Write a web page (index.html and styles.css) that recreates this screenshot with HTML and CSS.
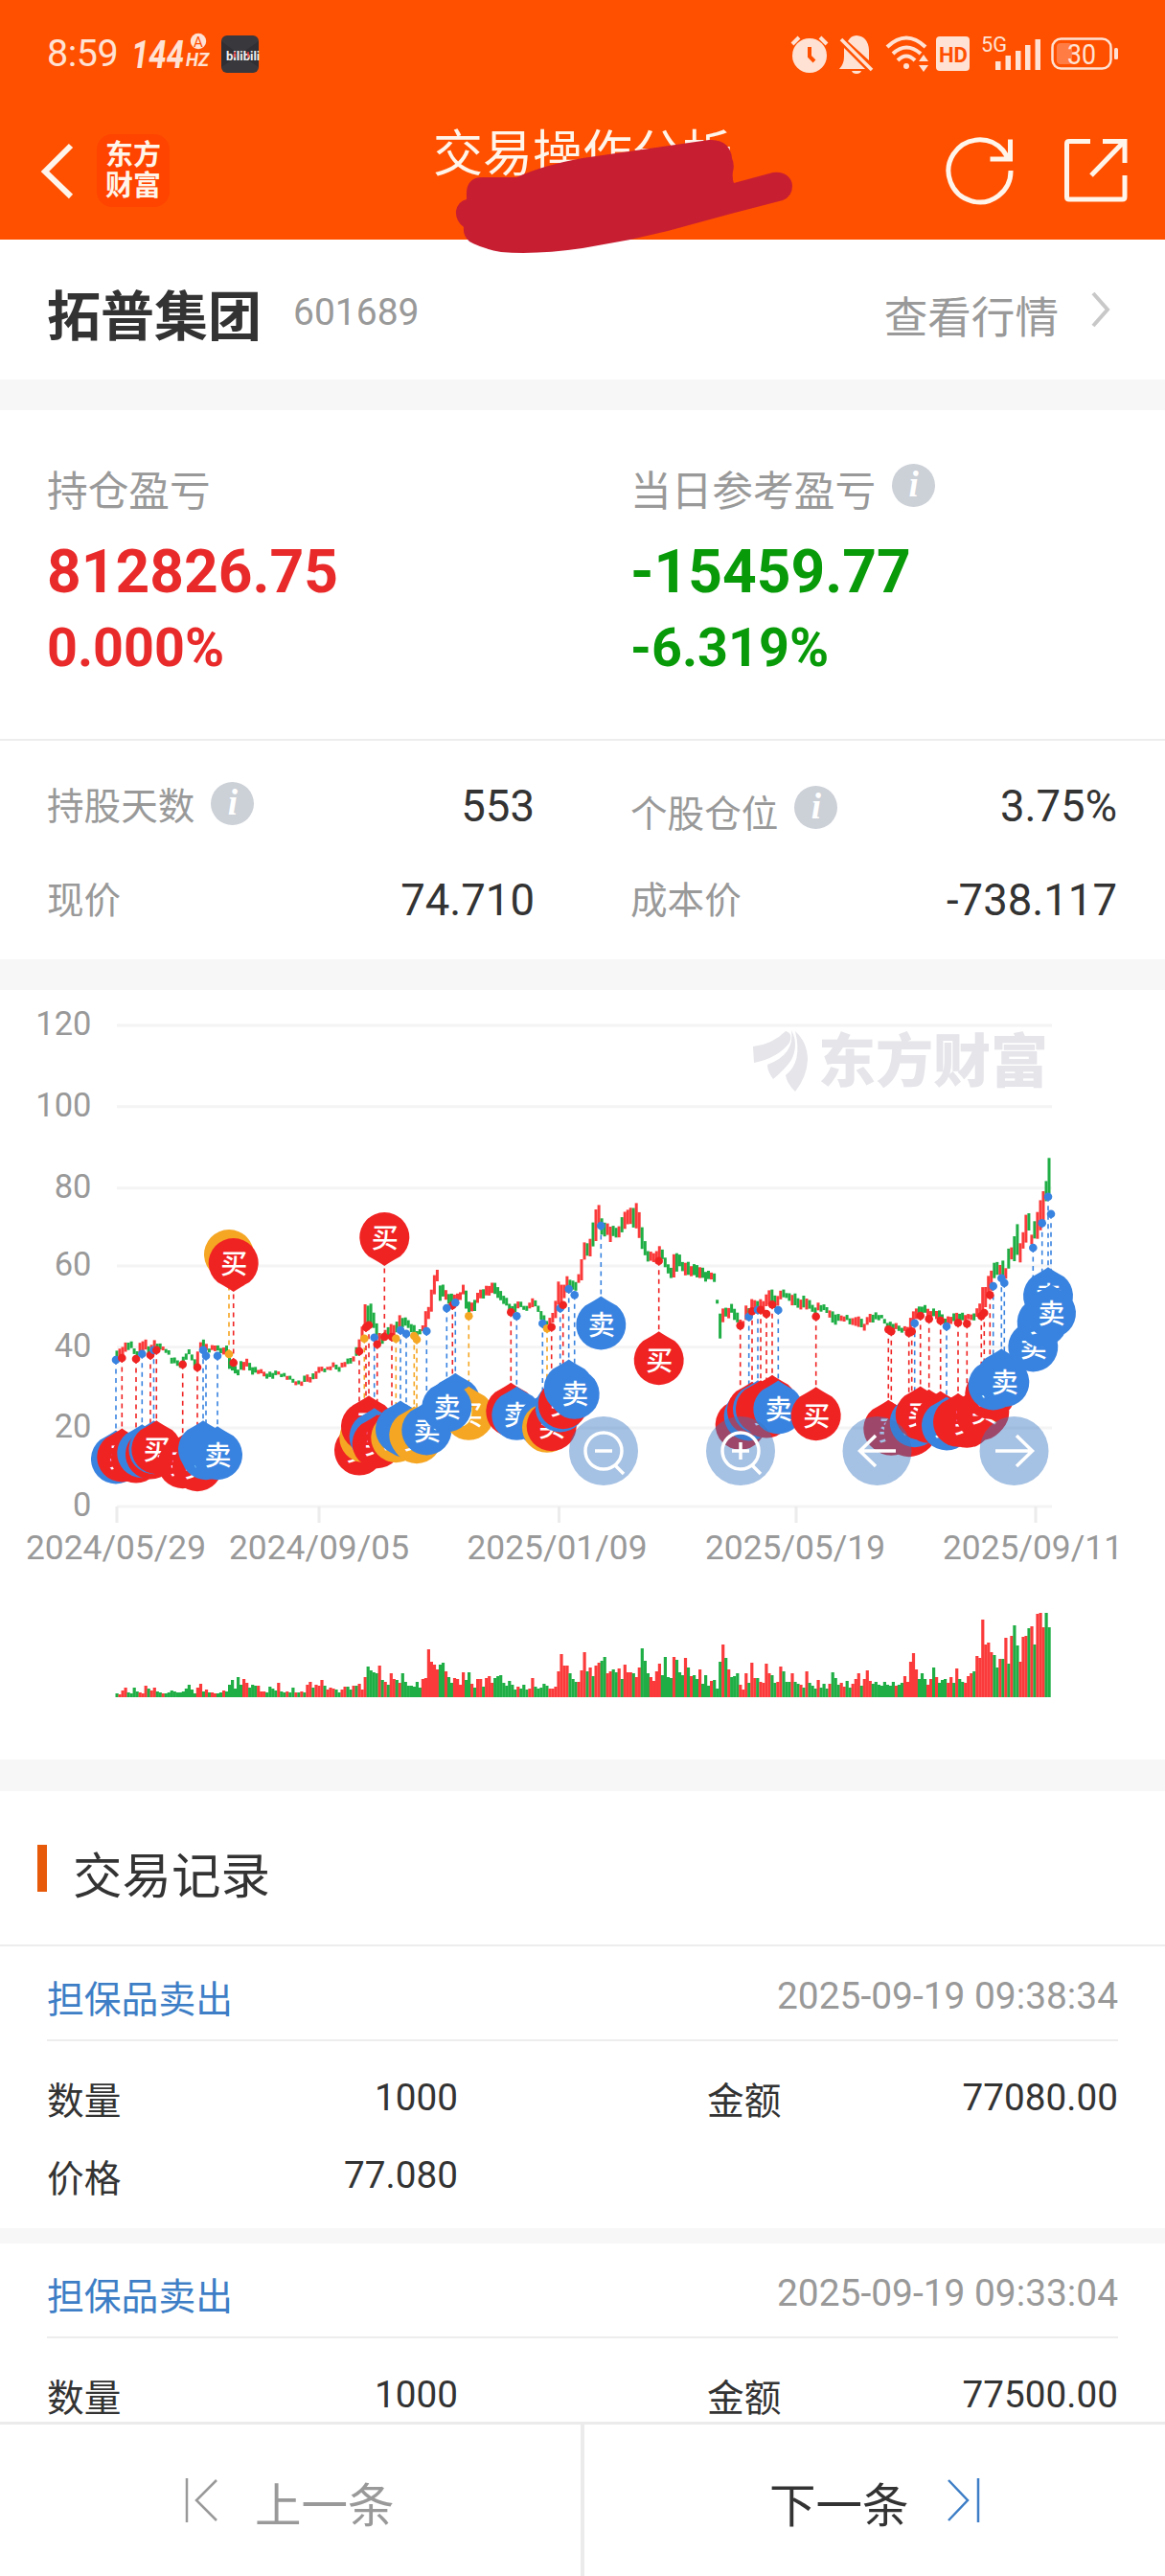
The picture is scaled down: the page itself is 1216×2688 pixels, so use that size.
FILE: index.html
```html
<!DOCTYPE html>
<html lang="zh-CN">
<head>
    <meta charset="UTF-8">
    <meta name="viewport" content="width=device-width, initial-scale=1.0">
    <title>交易操作分析</title>
    <link rel="stylesheet" href="styles.css">
</head>
<body>
    <header class="header">
        <!-- 状态栏 -->
        <div class="status-bar">
            <span class="time">8:59</span>
            <svg class="hz" width="60" height="44" viewBox="0 0 60 44">
                <text x="0" y="38" font-size="40" font-weight="700" font-style="italic" textLength="55" lengthAdjust="spacingAndGlyphs">144</text>
            </svg>
            <svg class="hz-unit" width="28" height="44" viewBox="0 0 28 44">
                <circle cx="14" cy="10" r="8.2"/>
                <text x="9" y="15.5" font-size="15" class="on-light">A</text>
                <text x="1" y="36" font-size="20" font-weight="700" font-style="italic" textLength="24" lengthAdjust="spacingAndGlyphs">HZ</text>
            </svg>
            <svg class="app-badge" width="39" height="39" viewBox="0 0 39 39">
                <rect width="39" height="39" rx="6" fill="#38383d"/>
                <path d="M0 6L19 20L39 6V33L19 20L0 33z" fill="#2f2f34"/>
                <text x="5" y="26" font-size="13" font-weight="700" fill="#eee">bilibili</text>
                <path d="M14 17V23M28 17V23" stroke="#e33" stroke-width="1.5"/>
            </svg>
            <div class="status-icons">
                <svg width="40" height="40" viewBox="0 0 40 40">
                    <circle cx="20" cy="21" r="18"/>
                    <path d="M2 9L9 2M38 9L31 2" class="light-line" stroke-width="4"/>
                    <path d="M20 12V22L25 27" class="dark-line" stroke-width="4"/>
                </svg>
                <svg class="bell" width="36" height="40" viewBox="0 0 36 40">
                    <path d="M9 6Q12 0 18 0Q30 1 31 15V26zM5 13L27 35H0Q5 30 5 22z"/>
                    <path d="M13 37H23Q22 40 18 40Q14 40 13 37z"/>
                    <path d="M2 4L34 36" class="light-line" stroke-width="3.5"/>
                </svg>
                <svg class="wifi" width="46" height="38" viewBox="0 0 46 38">
                    <path d="M2 12Q22 -7 42 12M8 19Q22 6 37 19M13 26Q22 17 31 26" class="light-line" stroke-width="4"/>
                    <circle cx="22" cy="32" r="3"/>
                    <path d="M40 20L45 27H35zM40 38L45 31H35z"/>
                </svg>
                <svg class="hd" width="35" height="36" viewBox="0 0 35 36">
                    <rect width="35" height="36" rx="4"/>
                    <text x="3" y="26.5" font-size="22" font-weight="700" class="on-light" textLength="30" lengthAdjust="spacingAndGlyphs">HD</text>
                </svg>
                <svg class="signal" width="64" height="38" viewBox="0 0 64 38">
                    <text x="0" y="17" font-size="22" textLength="27" lengthAdjust="spacingAndGlyphs">5G</text>
                    <rect x="15" y="27" width="5.5" height="9"/>
                    <rect x="25.5" y="21" width="5.5" height="15"/>
                    <rect x="36" y="16" width="5.5" height="20"/>
                    <rect x="46" y="10" width="5.5" height="26"/>
                    <rect x="56.5" y="4" width="5.5" height="32"/>
                </svg>
                <svg class="battery" width="72" height="34" viewBox="0 0 72 34">
                    <rect x="1.5" y="1.5" width="61" height="31" rx="9" class="light-line" stroke-width="2.5"/>
                    <rect x="6" y="6" width="16" height="22" rx="4" fill="#ff7d45"/>
                    <text x="17" y="27.5" font-size="29" textLength="30" lengthAdjust="spacingAndGlyphs">30</text>
                    <rect x="66" y="11" width="4" height="12" rx="1.5"/>
                </svg>
            </div>
        </div>
        <!-- 导航栏 -->
        <nav class="nav-bar">
            <svg class="back" width="36" height="60" viewBox="0 0 36 60">
                <path d="M33 4L6 31L33 57" fill="none" stroke="#fff5ea" stroke-width="6"/>
            </svg>
            <div class="logo"><span>东方</span><span>财富</span></div>
            <h1 class="nav-title">交易操作分析</h1>
            <svg class="refresh" width="70" height="70" viewBox="0 0 70 70">
                <path d="M67 35A32.5 32.5 0 1 1 59 14L65 23M66.5 2.5V23H45.5"/>
            </svg>
            <svg class="share" width="66" height="66" viewBox="0 0 66 66">
                <path d="M27 2.5H5Q2.5 2.5 2.5 5V60.5Q2.5 63 5 63H60.5Q63 63 63 60.5V38M40 2.5H63V25M61 4L28 38"/>
            </svg>
        </nav>
        <svg class="scribble" width="360" height="130" viewBox="475 140 360 130">
            <path d="M487 205C486 192 492 185 503 185L539 185C560 176 580 170 608 165L740 146C756 145 763 154 764 165Q767 172 765 179Q764 186 766 191L803 181C816 177 827 184 827 194Q827 205 817 209L763 223L697 241L658 250L608 259Q560 266 523 263Q502 259 490 252Q483 246 484 237Q475 230 476 220Q478 210 487 208z"/>
        </svg>
    </header>

    <main class="content">
        <section class="stock">
            <h2 class="stock-name">拓普集团</h2>
            <span class="stock-code">601689</span>
            <a class="quote-link">查看行情</a>
            <svg class="arrow" width="22" height="38" viewBox="0 0 22 38">
                <path d="M3 2L18 19L3 36" fill="none" stroke="#c8c8c8" stroke-width="4"/>
            </svg>
        </section>

        <section class="profit">
            <div class="profit-item up">
                <p class="label">持仓盈亏</p>
                <p class="amount">812826.75</p>
                <p class="percent">0.000%</p>
            </div>
            <div class="profit-item down">
                <p class="label">当日参考盈亏<i class="info">i</i></p>
                <p class="amount">-15459.77</p>
                <p class="percent">-6.319%</p>
            </div>
        </section>

        <section class="detail">
            <div class="cell"><span class="key">持股天数<i class="info">i</i></span><b>553</b></div>
            <div class="cell low"><span class="key">个股仓位<i class="info">i</i></span><b>3.75%</b></div>
            <div class="cell"><span class="key">现价</span><b>74.710</b></div>
            <div class="cell"><span class="key">成本价</span><b>-738.117</b></div>
        </section>

        <!-- K线图和成交量 -->
        <section class="chart">
            <svg id="chart" width="1216" height="803" viewBox="0 1033 1216 803">
                <g id="grid"></g>
                <g class="watermark">
                    <path d="M786 1092Q806 1090 820 1076Q828 1078 824 1088Q812 1104 787 1109zM826 1075Q834 1090 826 1106Q820 1115 807 1126Q801 1118 801 1111Q830 1100 826 1075zM830 1076Q843 1088 843 1106Q842 1124 830 1139Q821 1130 820 1122Q838 1108 830 1076z"/>
                    <text x="854" y="1129" font-size="60">东方财富</text>
                </g>
                <g id="volume"></g>
                <g id="candles"></g>
                <g id="leaders"></g>
                <g id="dots"></g>
                <g id="pins"></g>
                <g class="tools">
                    <circle cx="630" cy="1514" r="36"/>
                    <circle cx="773" cy="1514" r="36"/>
                    <circle cx="915.5" cy="1514" r="36"/>
                    <circle cx="1058.5" cy="1514" r="36"/>
                    <path d="M649 1514a19 19 0 1 1 -38 0a19 19 0 1 1 38 0M641 1528L651 1538M621 1514H639"/>
                    <path d="M792 1514a19 19 0 1 1 -38 0a19 19 0 1 1 38 0M784 1528L794 1538M764 1514H782M773 1505V1523"/>
                    <path d="M935 1514H897M914 1498L897.5 1514L914 1530"/>
                    <path d="M1039 1514H1077M1061 1498L1077.5 1514L1061 1530"/>
                </g>
            </svg>
        </section>

        <section class="records">
            <h2 class="records-title">交易记录</h2>
            <article class="record">
                <div class="record-head"><span class="type">担保品卖出</span><time>2025-09-19 09:38:34</time></div>
                <dl class="record-body">
                    <dt>数量</dt><dd>1000</dd>
                    <dt>金额</dt><dd>77080.00</dd>
                    <dt>价格</dt><dd>77.080</dd>
                </dl>
            </article>
            <article class="record">
                <div class="record-head"><span class="type">担保品卖出</span><time>2025-09-19 09:33:04</time></div>
                <dl class="record-body">
                    <dt>数量</dt><dd>1000</dd>
                    <dt>金额</dt><dd>77500.00</dd>
                </dl>
            </article>
        </section>
    </main>

    <footer class="pager">
        <a class="prev">
            <svg width="34" height="48" viewBox="0 0 34 48"><path d="M2 1V47M33 3L12 24L33 45"/></svg>
            <span>上一条</span>
        </a>
        <a class="next">
            <span>下一条</span>
            <svg width="36" height="48" viewBox="0 0 36 48"><path d="M2 3L22 24L2 45M33 1V47"/></svg>
        </a>
    </footer>
    <script src="chart.js"></script>
</body>
</html>
```

FILE: styles.css
```css
* {
    box-sizing: border-box;
}

body {
    display: flex;
    flex-direction: column;
    width: 1216px;
    height: 2688px;
    margin: 0;
    overflow: hidden;
    background: #f7f7f7;
    color: #333;
    font-family: Roboto, "Noto Sans CJK SC", sans-serif;
}

h1, h2, p, dl, dd {
    margin: 0;
    font-weight: 400;
}

svg {
    display: block;
    flex: none;
    overflow: visible;
}

/* 顶部 */
.header {
    position: relative;
    flex: none;
    height: 250px;
    background: #ff5000;
}

.status-bar {
    display: flex;
    align-items: flex-start;
    height: 106px;
    padding: 33px 47px 0 49px;
    color: #ffe2d3;
    fill: #ffe2d3;
}

.time {
    width: 88px;
    font-size: 39.5px;
    line-height: 46px;
    letter-spacing: -0.5px;
}

.hz-unit {
    margin-left: -4px;
}

.app-badge {
    margin: 4px 0 0 10px;
}

.on-light {
    fill: #ff5000;
}

.light-line {
    fill: none;
    stroke: #ffe2d3;
}

.dark-line {
    fill: none;
    stroke: #ff5000;
}

.status-icons {
    display: flex;
    margin: 4px 0 0 auto;
}

.bell {
    margin-left: 11px;
}

.wifi {
    margin-left: 12px;
}

.hd {
    margin: 1px 0 0 7px;
}

.signal {
    margin-left: 12px;
}

.battery {
    margin: 2px 0 0 9px;
}

.nav-bar {
    display: flex;
    align-items: center;
    height: 144px;
    padding: 0 39px 0 41px;
}

.logo {
    display: flex;
    flex-direction: column;
    justify-content: center;
    width: 76px;
    height: 76px;
    margin-left: 24px;
    border-radius: 16px;
    background: #ff4400;
    color: #fff5ea;
    font-size: 29px;
    font-weight: 700;
    line-height: 32px;
    text-align: center;
}

.nav-title {
    margin: -32px 0 0 275px;
    color: #fff5ea;
    font-size: 52px;
    line-height: 60px;
}

.refresh,
.share {
    fill: none;
    stroke: #fff5ea;
    stroke-width: 5;
}

.refresh {
    margin-left: auto;
}

.share {
    margin-left: 53px;
}

.scribble {
    position: absolute;
    left: 475px;
    top: 140px;
    z-index: 1;
    fill: #c81e32;
}

/* 页面内容 */
.content {
    flex: 1;
    min-height: 0;
    overflow: hidden;
}

.stock {
    display: flex;
    align-items: center;
    height: 146px;
    padding: 0 56px 0 49px;
    background: #fff;
}

.stock-name {
    padding-top: 16px;
    font-size: 56px;
    font-weight: 700;
    line-height: 66px;
}

.stock-code {
    margin: 5px 0 0 33px;
    color: #999;
    font-size: 39px;
}

.quote-link {
    margin: 9px 33px 0 auto;
    color: #999;
    font-size: 45.6px;
}

.profit {
    display: flex;
    height: 345px;
    margin-top: 32px;
    padding: 56px 0 0 49px;
    border-bottom: 2px solid #ededed;
    background: #fff;
}

.profit-item {
    flex: none;
    width: 609px;
}

.label {
    display: flex;
    height: 56px;
    color: #999;
    font-size: 42.7px;
    line-height: 58px;
}

.info {
    width: 45px;
    height: 45px;
    margin-left: 17px;
    border-radius: 50%;
    background: #ccd0d7;
    color: #fff;
    font: italic 700 37px/43px "Liberation Serif", serif;
    text-align: center;
}

.amount {
    margin-top: 17px;
    font-size: 62.3px;
    font-weight: 700;
    line-height: 80px;
}

.percent {
    font-size: 55.7px;
    font-weight: 700;
    line-height: 78px;
}

.up {
    color: #e92a2a;
}

.down {
    color: #089a08;
}

.detail {
    display: grid;
    grid-template-columns: 509px 508px;
    grid-template-rows: 98px 98px;
    column-gap: 100px;
    height: 228px;
    padding: 19px 0 0 49px;
    background: #fff;
}

.cell {
    display: flex;
    align-items: center;
    justify-content: space-between;
}

.key {
    display: flex;
    align-items: center;
    margin-top: -6px;
    color: #999;
    font-size: 38.6px;
}

.low .key {
    padding-top: 16px;
}

.low .info {
    margin-top: -8px;
}

.cell b {
    font-size: 45.5px;
    font-weight: 400;
}

/* 图表 */
.chart {
    margin-top: 32px;
    background: #fff;
}

.axis {
    fill: #999;
    font-size: 34.5px;
}

.watermark {
    fill: #e5e5ea;
    font-weight: 900;
}

.leader {
    fill: none;
    stroke-width: 1.6;
    stroke-dasharray: 5 4.5;
}

.pin-text {
    fill: #fff;
    font-size: 28px;
    font-weight: 500;
    text-anchor: middle;
}

.tools circle {
    fill: rgba(55, 117, 193, 0.45);
}

.tools path {
    fill: none;
    stroke: #fff;
    stroke-width: 3.5;
}

/* 交易记录 */
.records {
    margin-top: 33px;
}

.records-title {
    display: flex;
    align-items: center;
    height: 162px;
    padding: 9px 0 0 39px;
    border-bottom: 2px solid #ededed;
    background: #fff;
    font-size: 51.5px;
}

.records-title::before {
    width: 10px;
    height: 49px;
    margin: -9px 27px 0 0;
    background: #e65a0a;
    content: "";
}

.record {
    height: 294px;
    margin-bottom: 16px;
    padding: 0 49px;
    background: #fff;
}

.record-head {
    display: flex;
    align-items: center;
    justify-content: space-between;
    height: 99px;
    padding-top: 5px;
    border-bottom: 2px solid #ededed;
}

.type {
    padding-top: 2px;
    color: #3d7ec6;
    font-size: 38.8px;
}

.record-head time {
    color: #999;
    font-size: 38.9px;
}

.record-body {
    display: grid;
    grid-template-columns: 160px 269px 420px 269px;
    grid-auto-rows: 81px;
    align-items: center;
    padding-top: 18px;
    font-size: 38.7px;
}

.record-body dt {
    padding-top: 1px;
}

.record-body dt:nth-of-type(2) {
    padding-left: 260px;
}

.record-body dd {
    text-align: right;
}

/* 底部翻页 */
.pager {
    display: flex;
    flex: none;
    height: 161px;
    border-top: 3px solid #ebebeb;
    background: #fff;
    font-size: 48.5px;
}

.pager a {
    display: flex;
    align-items: center;
    width: 606px;
}

.pager span {
    padding-top: 4px;
}

.pager path {
    fill: none;
    stroke: currentColor;
    stroke-width: 2.5;
}

.pager .prev {
    width: 610px;
    padding-left: 193px;
    border-right: 4px solid #ebebeb;
    color: #999;
}

.prev span {
    margin-left: 39px;
}

.next {
    padding-left: 193px;
}

.next svg {
    margin-left: 39px;
    color: #3d7ec6;
}
```

FILE: chart.js
```js
const RED = '#f02323', BLUE = '#3983e0', ORANGE = '#f5a623';
const colors = { r: RED, b: BLUE, o: ORANGE };

// 成交量：颜色 + 柱高
const volume = `g4 r3 r7 r10 g5 g4 g10 g6 r5 r4 r12 g9 r7 r10 g6 g5 r4 g4 g5 g7 g6 g5 g5 g6 g9 g13 g8 g4 r10 r14
g6 r8 g5 r5 r4 g4 g5 r7 g6 g13 g18 g9 g21 g13 r19 r15 g10 g13 g12 r12 r6 r6 g5 g11 g9 g7 r15 g6 g5 r6
g5 g10 r5 g5 r6 g5 r13 r16 g10 r13 r12 r18 g12 r8 r10 r9 g8 g5 r8 r11 g11 g8 r12 g12 r14 r8 r21 g32 g28 g26
g25 r33 g18 r16 g13 r25 r19 g18 r15 g25 g16 g12 g12 g11 g16 g10 r19 r20 r50 r37 r34 r29 g34 g36 r27 g21 g15 r20 r19 r13
r26 g18 g26 r14 g10 r19 r19 g11 r20 r22 r15 g20 g22 g23 g15 g12 g17 g13 g8 r11 g9 g13 g8 r9 r20 g11 g9 g10 g14 g12
r9 r9 r11 r27 r45 r33 r33 g25 g19 g16 r16 r28 r47 g27 r31 g22 r33 r36 g38 g42 r25 r27 g29 g26 r30 g19 r34 r26 r26 g25
r21 r31 g51 g38 g25 r21 r17 r27 r35 g23 g42 g21 g20 r42 g39 g26 g23 r41 g31 r22 g23 g19 r29 g14 g23 g12 r17 g18 g9 g37
r55 g41 r29 g21 g22 g25 r13 r8 r25 g15 r36 r20 g20 r16 r15 r35 r25 g23 g15 r16 r32 g27 g16 g16 r25 g16 g14 r13 g10 r27
g15 g12 g9 r18 g10 g14 g9 r14 g26 g20 g13 r15 r11 g17 g10 r14 r19 r25 g12 r19 r28 r17 g14 g16 g13 g12 g16 g13 g12 g16
r12 g13 g15 r22 r16 r37 r46 r29 g19 g25 g19 r13 r19 g31 r21 g15 g18 g19 r15 r21 g15 r30 g19 g16 r15 r22 r25 g27 r43 r41
r81 r55 r57 r47 g44 g31 r40 g40 r62 g35 r64 g75 g54 r37 r63 r64 g72 r74 g55 r87 r88 r73 g88 g73`.split(/\s+/);

// K线区间：x 最高 最低
const bars = `121,1412,1420 127,1405,1418 133,1400,1408 137,1401,1408 142,1411,1416 146,1402,1413 151,1397,1408 155,1405,1414
161,1399,1410 165,1402,1410 170,1405,1409 175,1407,1411 179,1416,1422 184,1419,1425 189,1421,1426 193,1413,1420
197,1409,1414 203,1417,1424 206,1411,1427 209,1400,1409 213,1399,1408 218,1406,1410 224,1403,1409 230,1407,1412
236,1403,1412 240,1418,1430 245,1425,1433 250,1429,1434 253,1421,1430 258,1419,1427 263,1425,1433 270,1429,1433
277,1432,1437 285,1432,1438 291,1431,1434 298,1434,1438 306,1439,1443 314,1442,1446 320,1434,1442 325,1436,1441
330,1430,1438 335,1426,1431 342,1427,1430 348,1423,1428 354,1425,1430 359,1421,1426 365,1418,1424 370,1413,1418
375,1397,1412 379,1382,1397 382,1361,1382 386,1361,1381 389,1369,1385 392,1379,1396 396,1391,1402 401,1390,1400
406,1383,1395 411,1383,1393 417,1373,1385 421,1375,1384 427,1378,1386 432,1383,1392 437,1391,1396 441,1383,1389
444,1367,1387 448,1364,1375 451,1345,1368 454,1332,1352 457,1325,1337 460,1340,1356 464,1342,1352 468,1352,1362
473,1349,1360 479,1351,1358 483,1342,1352 486,1345,1365 491,1362,1370 496,1355,1367 501,1346,1355 506,1343,1353
511,1341,1351 518,1338,1350 522,1347,1357 527,1353,1361 532,1361,1369 537,1362,1371 541,1357,1364 547,1363,1367
552,1360,1366 555,1353,1363 560,1360,1365 565,1367,1376 570,1378,1384 575,1376,1383 578,1370,1380 581,1356,1374
584,1338,1362 588,1342,1356 591,1331,1350 595,1334,1344 600,1339,1348 604,1331,1340 607,1314,1336 610,1295,1313
613,1298,1311 617,1290,1310 620,1277,1302 623,1262,1295 626,1256,1280 629,1272,1289 633,1278,1290 636,1280,1296
639,1276,1287 643,1282,1292 647,1278,1290 651,1266,1285 655,1261,1276 660,1261,1279 665,1256,1284 669,1272,1298
673,1295,1310 677,1307,1317 682,1308,1317 688,1301,1317 691,1302,1312 695,1316,1326 700,1323,1332 704,1307,1334
708,1307,1321 712,1317,1326 717,1316,1331 722,1321,1331 727,1320,1333 731,1321,1332 737,1327,1337 743,1328,1335
747,1327,1337 749.5,1357,1361 752,1370,1396 756,1365,1373 760,1364,1375 764,1361,1370 768,1367,1380 772,1377,1383
776,1377,1382 779,1363,1378 783,1365,1377 786,1357,1370 792,1356,1369 797,1357,1370 801,1350,1362 805,1342,1360
809,1353,1366 813,1351,1360 817,1345,1354 821,1348,1353 825,1351,1360 829,1350,1363 834,1356,1365 840,1352,1365
845,1358,1367 850,1364,1370 854,1360,1368 859,1362,1368 865,1365,1371 870,1370,1383 876,1373,1379 883,1372,1377
890,1377,1384 896,1372,1383 902,1381,1388 908,1371,1380 915,1370,1377 921,1374,1377 926,1379,1386 933,1381,1388
940,1384,1389 947,1385,1390 951,1375,1387 955,1364,1376 960,1364,1372 964,1362,1370 970,1367,1375 975,1366,1374
981,1369,1378 987,1375,1384 994,1373,1380 1000,1369,1380 1006,1371,1378 1012,1373,1378 1018,1368,1376 1022,1363,1373
1026,1343,1369 1029,1343,1364 1032,1330,1353 1036,1325,1345 1039,1317,1333 1043,1320,1330 1046,1314,1335 1049,1324,1335
1052,1302,1325 1056,1303,1315 1059,1290,1316 1062,1276,1308 1065,1298,1318 1069,1280,1296 1072,1269,1298 1075,1266,1284
1078,1287,1297 1081,1275,1293 1084,1264,1292 1088,1243,1278 1091,1231,1252 1094,1209,1246 1097,1244,1267`
    .split(/\s+/).map(b => b.split(',').map(Number));

// 买卖点：颜色 x y，v 表示标签在上方
const trades = `b,121,1419 r,127.3,1417 r,142,1418 b,148.3,1412.7 r,157,1414 b,160.5,1408.7 r,163.3,1408.7 r,190.7,1423.7
r,206,1426.7 b,212,1408.7 b,215,1414.7 b,227,1414.7 o,239,1413,v r,243.7,1422,v
r,375,1410 o,380.3,1396.7 r,382,1385 r,385,1382.7 b,390.7,1395.7 r,393.7,1402.7 r,401.3,1395,v r,409,1395
o,413.3,1396.7 b,418,1388 b,424,1391.7 o,432.3,1394 o,435,1397.7 b,445.3,1389
r,472.3,1362 b,475.3,1359.3 o,489.3,1373.3 b,466.3,1365
r,533.3,1369.3 b,539.3,1373.3 b,566.3,1381 o,571,1386.3 r,575.7,1384.7 b,584.7,1365 r,587.7,1361.7
b,593.7,1345 b,599.7,1351.3 b,627.3,1279 r,687.7,1315.7
r,772.7,1383.3 b,781.7,1374 r,785,1368.3 b,791,1366.7 r,794,1366.7 r,800,1371 r,806,1361.3 b,812.3,1367
r,851.7,1373.7 r,927.3,1387.3 r,930.3,1389.3 r,948.7,1390.7 r,951.7,1389.3 b,954.7,1380.7 r,969.7,1376.3 r,960.7,1373
r,981.7,1378 b,988,1384 r,1000,1380.3 r,1009.3,1381.3 r,1024.3,1373.3 r,1027.3,1370 r,1033.3,1351.3
b,1036.7,1342 b,1045.3,1333.7 b,1048.3,1338.7 b,1078.3,1302 b,1087.7,1276.3 b,1094,1248.7 b,1097,1266.7`
    .split(/\s+/).map(t => t.split(','));

function fill(id, html) {
    document.getElementById(id).innerHTML = html;
}

// 坐标轴
let grid = '';
[[120, 1070], [100, 1154.7], [80, 1239.7], [60, 1321], [40, 1405.7], [20, 1490], [0, 1572]].forEach(([value, y]) => {
    grid += `<rect x="122" y="${y - 1.5}" width="976" height="3" fill="#f4f4f4"/>`;
    grid += `<text class="axis" x="95.5" y="${y + 10}" text-anchor="end">${value}</text>`;
});
[['2024/05/29', 122, 27], ['2024/09/05', 333, 239], ['2025/01/09', 583.5, 487.5], ['2025/05/19', 831, 736], ['2025/09/11', 1081, 984]].forEach(([date, x, tx]) => {
    grid += `<rect x="${x - 1.5}" y="1572" width="3" height="17" fill="#ececec"/>`;
    grid += `<text class="axis" x="${tx}" y="1627" textLength="188" lengthAdjust="spacingAndGlyphs">${date}</text>`;
});
fill('grid', grid);

// 每个交易日一根柱，价格在关键点之间插值
const step = 976 / volume.length;
let vol = '', candles = '', k = 0;
volume.forEach((v, i) => {
    const color = v[0] === 'r' ? '#fb3b3b' : '#1fae45';
    const x = 120.5 + i * step, h = Number(v.slice(1));
    vol += `<rect x="${x.toFixed(1)}" y="${1771 - h}" width="3.2" height="${h}" fill="${color}"/>`;
    const mid = x + 1.5;
    while (k < bars.length - 2 && bars[k + 1][0] < mid) k++;
    const a = bars[k], b = bars[k + 1];
    let t = Math.min(1, Math.max(0, (mid - a[0]) / (b[0] - a[0])));
    if (b[0] - a[0] < 4) t = Math.round(t);
    const shift = ((i * 7) % 5 - 2) * 0.7;
    const top = a[1] + (b[1] - a[1]) * t + shift, bottom = a[2] + (b[2] - a[2]) * t + shift;
    candles += `<rect x="${x.toFixed(1)}" y="${top.toFixed(1)}" width="3" height="${(bottom - top).toFixed(1)}" fill="${color}"/>`;
});
fill('volume', vol);
fill('candles', candles);

// 买卖点标签
let leaders = '', dots = '', pins = '';
trades.forEach(([type, sx, sy, above], i) => {
    const x = Number(sx), y = Number(sy), c = colors[type];
    const cy = above ? y - 104 : y + 103.5;
    const tip = above ? 30 : -30, edge = above ? 20 : -20, sweep = above ? 0 : 1;
    leaders += `<path class="leader" stroke="${c}" d="M${x} ${y}V${cy + tip}"/>`;
    dots += `<circle cx="${x}" cy="${y}" r="4.3" fill="${c}"/>`;
    pins += `<path fill="${c}" d="M${x} ${cy + tip}Q${x + 5} ${cy + tip * 0.88} ${x + 16.6} ${cy + edge}A26 26 0 1 ${sweep} ${x - 16.6} ${cy + edge}Q${x - 5} ${cy + tip * 0.88} ${x} ${cy + tip}z"/>`;
    // 被后面的标签完全盖住时不写字
    const covered = trades.slice(i + 1).some(n => n[3] === above && Math.hypot(n[1] - x, n[2] - y) < 9);
    if (!covered) {
        pins += `<text class="pin-text" x="${x + 0.5}" y="${cy + 10.5}">${type === 'b' ? '卖' : '买'}</text>`;
    }
});
fill('leaders', leaders);
fill('dots', dots);
fill('pins', pins);
```
